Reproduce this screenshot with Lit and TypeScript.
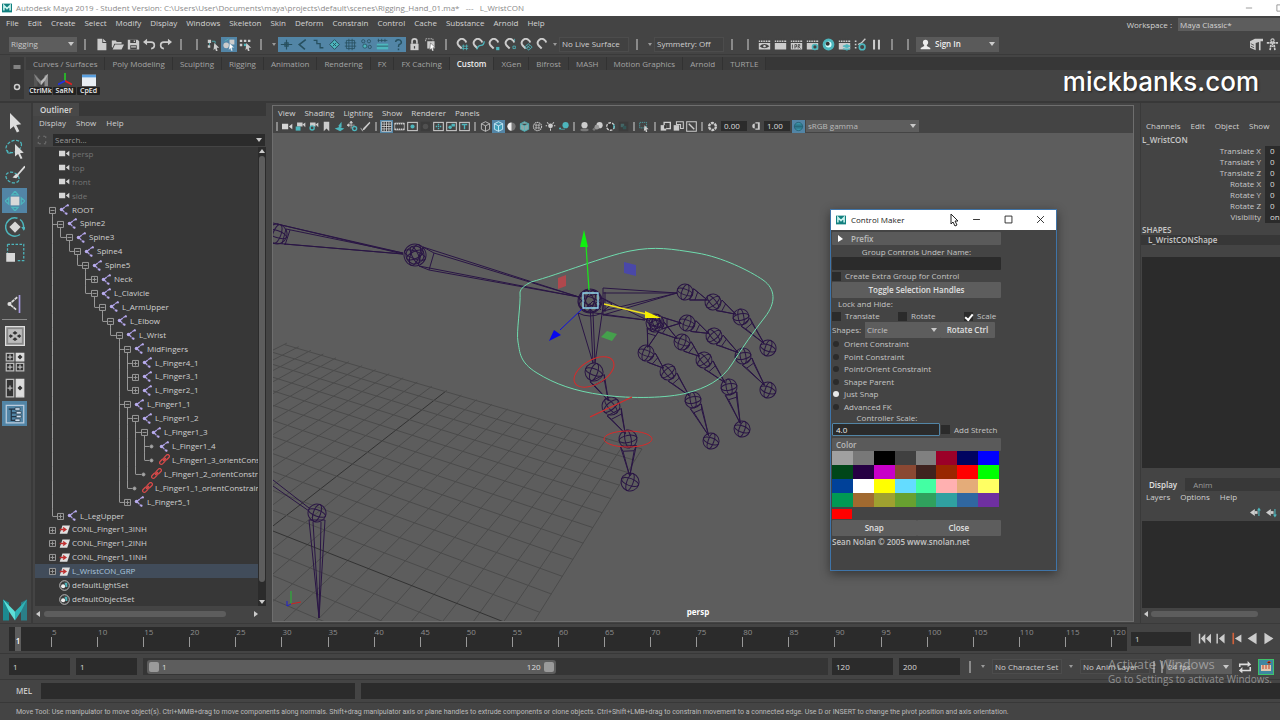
import { LitElement, html, svg, css, nothing } from "lit";
import { customElement } from "lit/decorators.js";
import { classMap } from "lit/directives/class-map.js";

const base = css`
  * { box-sizing: border-box; }
  :host { font-family: "Open Sans", "Noto Sans", sans-serif; font-size: 8px; line-height: 12px; color: #c8c8c8; }
  button, input, select { font: inherit; color: inherit; margin: 0; padding: 0; border: 0; border-radius: 0; background: none; outline: none; min-width: 0; }
  button { white-space: nowrap; }
  svg { display: block; flex: none; }
  .drop { position: relative; display: flex; align-items: center; background: #5d5d5d; }
  .drop select { appearance: none; flex: 1; height: 100%; padding: 0 14px 0 2px; }
  .drop::after { content: ""; position: absolute; right: 3px; top: calc(50% - 2px); border: 3px solid transparent; border-top: 4px solid #c8c8c8; border-bottom: 0; pointer-events: none; }
  .grip { width: 3px; align-self: stretch; margin: 2px; background: radial-gradient(circle, #6a6a6a 40%, transparent 50%) 0 0 / 2px 2px; }
`;

/* ---------- icon set, 16 x 16 ---------- */
const L = "#cccccc";
const T = "#4db6bd";
const K = "#27505f";
const clap = svg`<path d="M1 3h14v2H1zM1 6h14v8H1z" fill=${L}/><path d="M3 1v4M6 1v4M9 1v4M12 1v4" stroke="#444" stroke-width="1"/>`;
const magnet = svg`<path d="M10.500 2.500A5 5 0 0 0 3 9l4 4M10.500 2.500a5 5 0 0 1 2 3" fill="none" stroke=${L} stroke-width="2.400"/>`;
const box = svg`<rect x="1" y="2" width="14" height="12" fill="none" stroke=${L} stroke-width="1.500"/>`;
const cube = (c: string, f = "none") => svg`<path d="M8 1l6 3v8l-6 3-6-3V4zM2 4l6 3 6-3M8 7v8" fill=${f} stroke=${c} stroke-width="1.200"/>`;
const icons: Record<string, unknown> = {
  maya: svg`<path d="M0 1h16v14H0z" fill="#12807f"/><path d="M3 12V4l5 5 5-5v8" fill="none" stroke="#c9f2ee" stroke-width="2.500"/>`,
  mayaBig: svg`<path d="M0 1l4 2v12H0z" fill="#1d8a90"/><path d="M16 1l-4 2v12h4z" fill="#2a7f88"/><path d="M0 1l8 8v6L4 9z" fill="#5ee0d8"/><path d="M16 1L8 9v6l4-6z" fill="#2fb3b5"/>`,
  mayaGray: svg`<path d="M0 1l4 2v12H0z" fill="#555"/><path d="M16 1l-4 2v12h4z" fill="#8a8a8a"/><path d="M0 1l8 8v5L3 8z" fill="#888"/><path d="M16 1L8 9v5l5-6z" fill="#bbb"/>`,
  min: svg`<path d="M3 8h10" stroke="currentColor" stroke-width="1.300"/>`,
  max: svg`<path d="M3 3h10v10H3z" fill="none" stroke="currentColor" stroke-width="1.300"/>`,
  close: svg`<path d="M3 3l10 10M13 3L3 13" stroke="currentColor" stroke-width="1.300"/>`,
  newFile: svg`<path d="M3 1h6v5h5v9H3zM10 1l4 4h-4z" fill=${L}/>`,
  open: svg`<path d="M1 3h5l1 2h6v2H4l-2 5-1-1z" fill=${L}/><path d="M5 8h11l-3 6H2z" fill=${L}/>`,
  save: svg`<path d="M1 2h12l2 2v10H1z" fill=${L}/><path d="M4 2h7v4H4zM4 9h8v5H4z" fill="#444"/><path d="M5 11h6M9 3v2" stroke=${L} stroke-width="1.500"/>`,
  undo: svg`<path d="M3 5h7a3.500 3.500 0 0 1 0 8" fill="none" stroke=${L} stroke-width="2"/><path d="M0 5l5-4v8z" fill=${L}/>`,
  redo: svg`<path d="M13 5H6a3.500 3.500 0 0 0 0 8" fill="none" stroke=${L} stroke-width="2"/><path d="M16 5l-5-4v8z" fill=${L}/>`,
  selHier: svg`<path d="M1 2h4v4H1zM1 9h3v3H1z" fill=${L}/><path d="M6 4h4v3M3 6v3" stroke=${T} fill="none"/><path d="M9 6l6 6h-3l1 4-2 0-1-3-2 2z" fill=${L}/>`,
  selObj: svg`<circle cx="4" cy="9" r="3.500" fill=${L}/><path d="M8 2h6v6H8z" fill=${L}/><path d="M2 4l5-3" stroke=${T}/><path d="M8 6l6 6h-3l1 4-2 0-1-3-2 2z" fill="#fff" stroke="#5285a6" stroke-width=".7"/>`,
  selComp: svg`<path d="M1 2h3v3H1zM6 2h3v3H6zM1 7h3v3H1zM11 2h3v3h-3z" fill=${L}/><path d="M6 7h3v3H6z" fill=${T}/><path d="M9 6l6 6h-3l1 4-2 0-1-3-2 2z" fill=${L}/>`,
  mPlus: svg`<path d="M8 2v12M1 8h14M6 6h4v4H6z" stroke=${K} fill="none" stroke-width="1.400"/>`,
  mAngle: svg`<path d="M12 2L4 8l7 6" stroke=${K} fill="none" stroke-width="2"/>`,
  mCurve: svg`<path d="M2 3h4v4h4v5h4" stroke=${K} fill="none" stroke-width="1.600"/>`,
  mDiamond: svg`<path d="M8 2l6 6-6 6-6-6zM6 6l4 4M10 6l-4 4" stroke=${K} fill=${T} stroke-width="1.200"/>`,
  mLattice: svg`<path d="M3 3h10v10H3zM6 1v14M10 1v14M1 6h14M1 10h14" stroke=${K} fill="none"/>`,
  mParticles: svg`<circle cx="4" cy="4" r="2" fill="none" stroke=${K}/><circle cx="11" cy="4" r="2" fill="none" stroke=${K}/><circle cx="6" cy="10" r="2.500" fill=${T} stroke=${K}/><circle cx="12" cy="11" r="2" fill="none" stroke=${K}/>`,
  mRender: svg`<path d="M1 7h14v7H1z" fill=${T}/><path d="M2 3h12M3 1v4M7 1v4M11 1v4M1 10h14" stroke=${K}/>`,
  mHelp: svg`<path d="M4.500 5a3.500 3 0 1 1 4.500 3q-1 .5-1 3M8 13v2" stroke=${K} fill="none" stroke-width="1.800"/>`,
  lock: svg`<path d="M3 7h10v8H3z" fill=${L}/><path d="M5 7V4a3 3 0 0 1 6 0v3" stroke=${L} fill="none" stroke-width="2"/><path d="M8 10v3" stroke="#444" stroke-width="1.500"/>`,
  hilite: svg`<path d="M2 4V1h9v9H8" fill="none" stroke=${L} stroke-dasharray="2 1"/><path d="M4 4h9v9H4z" fill=${L}/><path d="M8 6l6 6h-3l1 4-2 0-1-3-2 2z" fill="#fff" stroke="#444" stroke-width=".6"/>`,
  magGrid: svg`${magnet}<path d="M9 8v7M13 8v7M7 10h8M7 13h8" stroke=${T}/>`,
  magCurve: svg`${magnet}<path d="M6 14q1-5 5-5t4-5" stroke=${T} fill="none" stroke-width="1.600"/>`,
  magPoint: svg`${magnet}<path d="M10 11h4v4h-4z" fill=${T}/>`,
  magProj: svg`${magnet}<path d="M13 1v3M11 10h3v3h-3z" stroke=${T} fill="none"/>`,
  magPlane: svg`${magnet}<path d="M10 7l5 4-4 4-5-4zM8 9l5 4M12 9l-4 4" stroke=${T} fill="none"/>`,
  magLive: magnet,
  rView: svg`${clap}<path d="M2 10q6-5 12 0-6 5-12 0z" fill="#444"/><circle cx="8" cy="10" r="1.500" fill=${L}/>`,
  rFrame: clap,
  rIpr: svg`${clap}<path d="M3 8v5M6 13V8h2v3H6M10 13V8h2v2h-2l3 3" stroke="#444" fill="none"/>`,
  rSet: svg`${clap}<circle cx="11" cy="11" r="3" fill="#444" stroke=${T} stroke-width="2"/>`,
  rHyper: svg`<circle cx="8" cy="8" r="5.500" fill="#dff" stroke=${T} stroke-width="3.500"/><circle cx="7" cy="7" r="2.500" fill="#333"/>`,
  rLayers: svg`${clap}<path d="M6 10l5-2 4 2-4 2zM6 13l5 2 4-2" fill=${T} stroke=${T}/>`,
  rLight: svg`<path d="M1 4h2M1 8h2M1 12h2M5 8l4-2 5-5" stroke=${L} stroke-width="1.700"/><circle cx="10" cy="11" r="3.500" fill="none" stroke=${T} stroke-width="2"/>`,
  pause: svg`<path d="M5 2v12M11 2v12" stroke=${L} stroke-width="2.500"/>`,
  user: svg`<circle cx="8" cy="5" r="3.800" fill="#eee"/><path d="M6 8h4v2l5 3v2H1v-2l5-3z" fill="#eee"/>`,
  modelKit: svg`<path d="M0 4l6-3h10v3h-3v11h-2V5L7 6v9l-7-3z" fill=${L}/><path d="M1 7l4 2M1 10l4 2" stroke="#444"/>`,
  character: svg`<circle cx="8" cy="3" r="2" fill="none" stroke=${L} stroke-width="1.400"/><path d="M1 6h14M8 6v5M5 15l1-7M11 15l-1-7" stroke=${L} stroke-width="2" fill="none" stroke-dasharray="3 .6"/>`,
  rows: svg`<path d="M1 6h14M1 10h14" stroke=${L} stroke-width="2"/>`,
  gear: svg`<circle cx="8" cy="8" r="5" fill="none" stroke=${L} stroke-width="3"/>`,
  axes: svg`<path d="M8 9V0" stroke="#28c028" stroke-width="2"/><path d="M8 9l8 4" stroke="#e02020" stroke-width="2"/><path d="M8 9l-8 4" stroke="#2030e0" stroke-width="2"/>`,
  window: svg`<path d="M0 2h16v13H0z" fill="#e8eef4"/><path d="M0 2h16v3H0z" fill="#5aa0e0"/>`,
  arrow: svg`<path d="M4 0l9 9-4 .5 2.500 5-2 1L7 10.500 4 13z" fill="#dcdcdc"/>`,
  lasso: svg`<ellipse cx="7" cy="6" rx="6.500" ry="4.500" fill="none" stroke=${T} stroke-dasharray="2.500 1.200" transform="rotate(-25 7 6)"/><path d="M2 9q-1 3 3 2" stroke=${T} fill="none"/><path d="M8 4l7 7-3 .4 2 4-1.500.6-2-4L8 14z" fill="#dcdcdc"/>`,
  paint: svg`<ellipse cx="6" cy="10" rx="5.500" ry="4" fill="none" stroke=${T} stroke-dasharray="2.500 1.200" transform="rotate(25 6 10)"/><path d="M16 1l-6 7" stroke="#dcdcdc" stroke-width="1.500"/><path d="M6 10l3-3 2 1.500-2 2z" fill="#dcdcdc"/>`,
  move: svg`<path d="M4.500 4.500h7v7h-7z" fill="#d8d8d8"/><path d="M8 0l2.500 3h-5zM8 16l2.500-3h-5zM0 8l3-2.500v5zM16 8l-3-2.500v5z" fill="none" stroke=${T}/>`,
  rotate: svg`<path d="M8 3.500L12.500 8 8 12.500 3.500 8z" fill="#d8d8d8"/><path d="M10 1A7.300 7.300 0 1 0 12 14M12 2q3 2 3 7" fill="none" stroke=${T} stroke-width="1.200"/><path d="M13 8h4l-2 3z" fill=${T}/>`,
  scale: svg`<path d="M2 1h13v13H9M2 1v7" fill="none" stroke=${T} stroke-dasharray="2 1.200"/><path d="M1 8h7v7H1z" fill="#d8d8d8"/>`,
  lastTool: svg`<path d="M10 2L3 8l6 5" fill="none" stroke="#ddd" stroke-width="1.500" stroke-dasharray="3 .5"/><circle cx="3" cy="8" r="1.700" fill="#ddd"/><path d="M12 0v16" stroke="#a79be0" stroke-width="1.500"/>`,
  persp: svg`<path d="M.5.5h15v15H.5z" fill="#888" stroke="#ddd"/><path d="M2.500 2.500h11v11h-11z" fill="#bbb"/><path d="M8 4l2 1.500L8 7 6 5.500zM8 9l2 1.500L8 12l-2-1.500zM4.500 6.500L6.500 8l-2 1.500L3 8zM11.500 6.500L13 8l-1.500 1.500-2-1.500z" fill="#333"/>`,
  quad: svg`<path d="M1 1h6v6H1zM1 9h6v6H1zM9 9h6v6H9z" fill="#333" stroke="#bbb"/><path d="M9 1h6v6H9z" fill="#ddd" stroke="#ddd"/><path d="M4 2v4M2 4h4M4 10v4M2 12h4M12 10v4M10 12h4" stroke="#bbb"/><path d="M12 2l2 2-2 2-2-2z" fill="#333"/>`,
  two: svg`<path d="M1 1h6v14H1z" fill="#333" stroke="#bbb"/><path d="M9 1h6v14H9z" fill="#ddd" stroke="#ddd"/><path d="M4 6v4M2 8h4" stroke="#bbb"/><path d="M12 6l2 2-2 2-2-2z" fill="#333"/>`,
  tree: svg`<path d="M1 1h14v14H1z" fill="none" stroke="#bcd"/><path d="M3 4h5M5 4v9h4M5 7h5M5 10h5" fill="none" stroke="#234" stroke-width="1"/><path d="M8 3h4v2H8zM9 6h4v2H9zM9 9h4v2H9zM8 12h4v2H8z" fill="#cde" stroke="#234" stroke-width=".5"/>`,
  cam: svg`<path d="M0 4h9v8H0zM10 8l5-4v8z" fill="#d5d5d5"/>`,
  joint: svg`<path d="M13 1L4 8l7 7" fill="none" stroke="#a99be0" stroke-width="2" stroke-dasharray="5 .8"/><circle cx="3.500" cy="8" r="2.400" fill="#b8acec"/><circle cx="13" cy="2" r="1.500" fill="#b8acec"/><circle cx="11" cy="14" r="1.500" fill="#b8acec"/>`,
  link: svg`<g transform="rotate(-45 8 8)" fill="none" stroke="#d94a4a" stroke-width="1.800"><rect x="-1" y="5.500" width="9" height="5" rx="2.500"/><rect x="8" y="5.500" width="9" height="5" rx="2.500"/><path d="M5 8h6"/></g>`,
  group: svg`<path d="M5 2h11l-4 12H1z" fill="#e0e0e0"/><path d="M1 8h8M6 5l4 3-4 3" stroke="#c03030" fill="none" stroke-width="2"/>`,
  set: svg`<circle cx="8" cy="8" r="7" fill="#3a3a3a" stroke="#ccc" stroke-width="1.300"/><circle cx="6" cy="9" r="3" fill="#eee"/><path d="M8 4h4v6h-2z" fill=${T}/>`,
  frame: svg`<path d="M2 6V2h4M10 2h4v4M14 10v4h-4M6 14H2v-4" fill="none" stroke="#777" stroke-width="1.500" stroke-dasharray="3 1"/>`,
  camLock: svg`<path d="M3 2h8v6H3zM11 5l4-3v7z" fill=${L}/><path d="M1 8h7v6H1z" fill=${T}/>`,
  camGear: svg`<path d="M3 2h8v6H3zM11 5l4-3v7z" fill=${L}/><circle cx="6" cy="10" r="3" fill="#444" stroke=${T} stroke-width="2"/>`,
  bookmark: svg`<path d="M4 1h8v14l-4-4-4 4z" fill=${L}/>`,
  plane: svg`<path d="M1 11l6-2 8 2-6 4z" fill=${T}/><path d="M7 11V6l4-5v8z" fill=${T}/>`,
  pan: svg`<path d="M6 1v10M1 6h10M6 0l2 3H4zM0 6l3-2v4z" stroke=${L} fill=${L}/><circle cx="11" cy="11" r="3" fill="none" stroke=${T} stroke-width="2"/>`,
  pencil: svg`<path d="M14 1L5 10l-2 4 4-2 8-9z" fill=${L}/><path d="M1 10l3 5" stroke=${L}/>`,
  grid: svg`<path d="M1 1h14v14H1z" fill="#222"/><path d="M1 1h14v14H1zM4.500 1v14M8 1v14M11.500 1v14M1 4.500h14M1 8h14M1 11.500h14" stroke="#eee" fill="none"/>`,
  film: svg`<path d="M1 3h14v10H1z" fill="none" stroke=${L}/><path d="M1 4h14M1 12h14" stroke=${L} stroke-width="2" stroke-dasharray="2 1"/>`,
  res: svg`${box}<circle cx="8" cy="8" r="3" fill=${T}/>`,
  dim: svg`<path d="M1 1h14v14H1z" fill="#3c3c3c"/><circle cx="8" cy="8" r="4" fill="#505050"/>`,
  chart: svg`${box}<path d="M4 8h8M8 4v8" stroke=${T} stroke-width="2" stroke-dasharray="2 1"/>`,
  action: svg`${box}<circle cx="6" cy="9" r="2.500" fill=${T}/><path d="M8 4h5v4H8z" fill=${T}/>`,
  title: svg`${box}<path d="M4 5h8M8 5v7" stroke=${T} stroke-width="2"/>`,
  wire: cube(L),
  shaded: cube("#d8f4ff", "#3f9fb8"),
  half: svg`<circle cx="8" cy="8" r="6" fill="#777"/><path d="M8 2a6 6 0 0 0 0 12z" fill="#eee"/>`,
  textured: cube(T, "#8aa"),
  checker: svg`<circle cx="8" cy="8" r="6" fill="none" stroke=${L} stroke-dasharray="2 1" stroke-width="1.500"/><path d="M4 6h8M4 10h8M6 4v8M10 4v8" stroke=${L}/>`,
  bulb: svg`<circle cx="8" cy="7" r="3.500" fill=${L}/><path d="M8 11v3M1 7h2M13 7h2M3 2l2 2M13 2l-2 2" stroke=${L} stroke-width="1.500"/>`,
  shadow: svg`<circle cx="11" cy="6" r="4.500" fill=${T}/><circle cx="3" cy="11" r="1.500" fill=${T}/><path d="M4 12h6" stroke=${T}/>`,
  ao: svg`<circle cx="8" cy="6" r="4.500" fill=${L}/><ellipse cx="8" cy="13" rx="6" ry="2" fill="#777"/>`,
  blur: svg`<circle cx="11" cy="6" r="4.500" fill=${L}/><circle cx="7" cy="9" r="3.500" fill="#999"/><circle cx="3" cy="12" r="2" fill="#777"/>`,
  aa: svg`<circle cx="8" cy="8" r="5.500" fill="#333" stroke=${L} stroke-width="2" stroke-dasharray="4 1.500"/><path d="M13 5v6" stroke=${T} stroke-width="2"/>`,
  dof: svg`<path d="M1 1h14v14H1z" fill="#3c3c3c"/><path d="M4 4h5v5H4z" fill="#466"/><path d="M7 7h5v5H7z" fill="#355"/>`,
  isolate: svg`<path d="M1 2h10v8H1z" fill="none" stroke=${T} stroke-dasharray="2 1"/><path d="M8 6l6 6h-3l1 4-2 0-1-3-2 2z" fill=${L}/>`,
  xray: svg`<path d="M1 6h8v8H1z" fill=${L}/><path d="M6 2h9v9H6z" fill="none" stroke=${L} stroke-width="2"/><path d="M6 6h3v5H6z" fill="#333"/>`,
  xrayA: svg`<path d="M5 1h10v10h-4V5H5z" fill="none" stroke=${L} stroke-width="1.500"/><path d="M1 6h8v8H1z" fill=${L}/>`,
  xrayJ: svg`<path d="M1 1h14v14H1z" fill="none" stroke=${L} stroke-width="1.500"/><path d="M4 4l8 8" stroke=${L} stroke-width="2"/>`,
  aperture: svg`<circle cx="8" cy="8" r="5" fill="none" stroke=${L} stroke-width="3.500" stroke-dasharray="4 1.200"/>`,
  contrast: svg`<path d="M7 2h7v12H7v-2h4V4H7z" fill=${L}/><path d="M6 4a4 4 0 0 0 0 8z" fill=${L}/>`,
  ball: svg`<circle cx="8" cy="8" r="6" fill="#3a94a8" stroke="#1f5566"/><path d="M3 6h10M2 8h12M3 10h10" stroke="#1f5566"/>`,
  layerUp: svg`<path d="M0 8l7-5v10z" fill=${L}/><path d="M7 6h4v4H7z" fill=${L}/><path d="M13 3v10M11 5l2-3 2 3" stroke=${T} fill="none" stroke-width="1.600"/>`,
  layerDown: svg`<path d="M0 8l7-5v10z" fill=${L}/><path d="M7 6h4v4H7z" fill=${L}/><path d="M13 3v10M11 11l2 3 2-3" stroke=${T} fill="none" stroke-width="1.600"/>`,
  toStart: svg`<path d="M1 2h1.800v12H1zM9 2v12L3.500 8zM16 2v12L10 8z" fill=${L}/>`,
  stepBack: svg`<path d="M3 2h1.800v12H3zM13 2v12L6 8z" fill=${L}/>`,
  keyBack: svg`<path d="M3 1h2v14H3z" fill="#d0603a"/><path d="M14 3v10L6 8z" fill=${L}/>`,
  playBack: svg`<path d="M13 1v14L2 8z" fill=${L}/>`,
  play: svg`<path d="M3 1v14l11-7z" fill=${L}/>`,
  loop: svg`<path d="M2 8V5h10M14 8v4H4" stroke="#ddd" fill="none" stroke-width="1.800"/><path d="M11 1l4 4-4 3zM5 8l-4 4 4 3z" fill="#ddd"/>`,
  prefs: svg`<path d="M0 0h16v16H0z" fill="#3f86a0" stroke="#3fc26a" stroke-width="2"/><path d="M3 6h10v6H3z" fill="#e0c8b0"/><path d="M5 6v4M8 6v4M11 3v7M9 4l2-2 2 2" stroke="#c04020" stroke-width="1"/>`,
};
const icon = (name: string, size = 12) =>
  svg`<svg width=${size} height=${size} viewBox="0 0 16 16" aria-hidden="true">${icons[name]}</svg>`;

/* ---------- outliner ---------- */
type Row = [name: string, level: number, kind: string, box?: string];
const ROWS: Row[] = [
  ["persp", 0, "cam"], ["top", 0, "cam"], ["front", 0, "cam"], ["side", 0, "cam"],
  ["ROOT", 0, "joint", "-"], ["Spine2", 1, "joint", "-"], ["Spine3", 2, "joint", "-"], ["Spine4", 3, "joint", "-"],
  ["Spine5", 4, "joint", "-"], ["Neck", 5, "joint", "+"], ["L_Clavicle", 5, "joint", "-"], ["L_ArmUpper", 6, "joint", "-"],
  ["L_Elbow", 7, "joint", "-"], ["L_Wrist", 8, "joint", "-"], ["MidFingers", 9, "joint", "-"],
  ["L_Finger4_1", 10, "joint", "+"], ["L_Finger3_1", 10, "joint", "+"], ["L_Finger2_1", 10, "joint", "+"],
  ["L_Finger1_1", 9, "joint", "-"], ["L_Finger1_2", 10, "joint", "-"], ["L_Finger1_3", 11, "joint", "-"],
  ["L_Finger1_4", 12, "joint", "."], ["L_Finger1_3_orientConst", 12, "link", "."],
  ["L_Finger1_2_orientConstra", 11, "link", "."], ["L_Finger1_1_orientConstraint", 10, "link", "."],
  ["L_Finger5_1", 9, "joint", "+"], ["L_LegUpper", 1, "joint", "+"],
  ["CONL_Finger1_3INH", 0, "group", "+"], ["CONL_Finger1_2INH", 0, "group", "+"], ["CONL_Finger1_1INH", 0, "group", "+"],
  ["L_WristCON_GRP", 0, "group", "+"], ["defaultLightSet", 0, "set"], ["defaultObjectSet", 0, "set"],
];
const indent = (level: number) => Math.round((level * 25) / 3);
const continues = (i: number, level: number) => {
  for (let j = i + 1; j < ROWS.length; j++) {
    if (ROWS[j][1] <= level) return false;
    if (ROWS[j][1] === level + 1) return true;
  }
  return false;
};

@customElement("outliner-panel")
class OutlinerPanel extends LitElement {
  static styles = [base, css`
    :host { display: flex; flex-direction: column; background: #444; padding-right: 2px; min-height: 0; }
    .tabs { display: flex; background: #383838; height: 13px; }
    .tab { background: #484848; padding: 0 7px; font-weight: 600; color: #d8d8d8; }
    .menu { display: flex; gap: 10px; padding: 0 6px; height: 13px; color: #d0d0d0; }
    .search { display: flex; gap: 6px; align-items: center; padding: 0 1px 0 4px; margin: 5px 0 1px; }
    .drop { flex: 1; height: 12px; background: #2b2b2b; }
    .drop input { flex: 1; height: 12px; padding: 0 2px; color: #999; }
    .drop input::placeholder { color: #999; opacity: 1; }
    .body { flex: 1; display: grid; grid-template: minmax(0, 1fr) / minmax(0, 1fr) 8px; background: #2b2b2b; min-height: 0; margin-left: 2px; }
    .list { list-style: none; margin: 0; padding: 0; display: grid; grid-auto-rows: minmax(0, 1fr); background: #373737; overflow: hidden; }
    .row { min-height: 0; display: flex; align-items: center; white-space: nowrap; }
    .row svg.guides { height: 100%; }
    .row span { padding-left: 2px; color: #d0d0d0; }
    .row.cam span { color: #757575; }
    .row.on { background: #414c5a; }
    .row.on span { color: #a9c4dc; }
    .bar { display: flex; flex-direction: column; align-items: center; gap: 3px; padding: 2px 0; }
    .thumb { width: 6px; border-radius: 3px; background: #5d5d5d; flex: 1; }
    .rest { flex: 0 1 12px; }
    .hbar { display: flex; align-items: center; gap: 4px; height: 9px; margin: 3px 0 5px; padding: 0 8px 0 3px; }
    .hthumb { flex: 9; height: 6px; border-radius: 3px; background: #5d5d5d; }
    .hrest { flex: 1; }
  `];
  guides(i: number) {
    const [, level, , mark] = ROWS[i];
    const x = (l: number) => indent(l) + 17.5;
    const parts: unknown[] = [];
    for (let k = 0; k < level - 1; k++) {
      if (continues(i, k)) parts.push(svg`<line x1=${x(k)} x2=${x(k)} y1="0" y2="100%" />`);
    }
    if (level > 0) {
      const p = x(level - 1);
      parts.push(svg`<line x1=${p} x2=${p} y1="0" y2=${continues(i, level - 1) ? "100%" : "50%"} />`);
      parts.push(svg`<svg y="50%" overflow="visible"><path d="M${p} .5H${x(level) - 3}" /></svg>`);
    }
    const c = x(level);
    if (mark === "-") parts.push(svg`<line x1=${c} x2=${c} y1="70%" y2="100%" />`);
    if (mark === ".") parts.push(svg`<svg y="50%" overflow="visible"><circle cx=${c - 1} cy=".5" r="1.500" fill="#aaa" /></svg>`);
    if (mark === "-" || mark === "+") {
      parts.push(svg`<svg y="50%" overflow="visible"><path d="M${c - 3} -2.500h6v6h-6z" fill="#373737" /><path d="M${c - 2} .5h4" />${
        mark === "+" ? svg`<path d="M${c} -1.500v4" />` : nothing}</svg>`);
    }
    return svg`<svg class="guides" width=${indent(level) + 24} stroke="#989898" stroke-width="1" fill="none">${parts}</svg>`;
  }
  render() {
    return html`
      <div class="tabs"><button class="tab">Outliner</button></div>
      <div class="menu">${["Display", "Show", "Help"].map((m) => html`<button>${m}</button>`)}</div>
      <div class="search">${icon("frame", 10)}<div class="drop"><input aria-label="Search" placeholder="Search..." /></div></div>
      <div class="body">
        <ul class="list">
          ${ROWS.map(([name, , kind], i) => html`
            <li class=${classMap({ row: true, cam: kind === "cam", on: name === "L_WristCON_GRP" })}>
              ${this.guides(i)}${icon(kind, 11)}<span>${name}</span>
            </li>`)}
        </ul>
        <div class="bar">
          <svg width="6" height="4"><path d="M0 4h6L3 0z" fill="#ccc" /></svg><div class="thumb"></div><div class="rest"></div>
          <svg width="6" height="4"><path d="M0 0h6L3 4z" fill="#ccc" /></svg>
        </div>
      </div>
      <div class="hbar"><svg width="4" height="6"><path d="M4 0v6L0 3z" fill="#ccc" /></svg><div class="hthumb"></div><div class="hrest"></div>
        <svg width="4" height="6"><path d="M0 0v6l4-3z" fill="#ccc" /></svg></div>`;
  }
}

/* ---------- viewport scene ---------- */
const joint = (x: number, y: number, r: number, a = 20) => svg`<g transform="translate(${x} ${y}) rotate(${a})">
  <circle r=${r} /><ellipse rx=${r} ry=${r * 0.35} /><ellipse rx=${r * 0.4} ry=${r} /></g>`;
const bone = (x1: number, y1: number, x2: number, y2: number, w: number, off = 7) => {
  const d = Math.hypot(x2 - x1, y2 - y1);
  const ux = (x2 - x1) / d, uy = (y2 - y1) / d;
  const bx = x1 + ux * off, by = y1 + uy * off;
  const ex = x2 - ux * 6, ey = y2 - uy * 6;
  const pt = (s: number, f: number) => `${bx - uy * w * s + ux * f} ${by + ux * w * s + uy * f}`;
  return svg`<path d="M${pt(1, 0)}L${pt(-1, 0)}L${pt(-0.7, 5)}L${pt(0.7, 5)}ZM${pt(1, 0)}L${ex} ${ey}L${pt(-1, 0)}M${pt(0.7, 5)}L${ex} ${ey}L${pt(-0.7, 5)}" />`;
};
const chain = (pts: number[][], r = 8, w = 6) => pts.map(([x, y], i) => svg`
  ${joint(x, y, r, 20 + i * 30)}${i < pts.length - 1 ? bone(x, y, pts[i + 1][0], pts[i + 1][1], w) : nothing}`);

const floor = () => {
  const lines: unknown[] = [];
  for (let i = 0; i <= 24; i++) {
    const x = 642 - 17.8 * i + 0.125 * i * i;
    const y = 449 - (642 - x) * 0.298;
    const k = (660 - y) / (y - 37);
    lines.push(svg`<path d="M${x} ${y}L${x + (x - 900) * k} 660" stroke=${i === 12 ? "#333" : "#4b4b4b"} />`);
  }
  for (let j = 0; j <= 16; j++) {
    const y = 449 + 11 * j + 0.35 * j * j;
    const x = 642 - (y - 449) / 1.6;
    const m = (y + 206) / (x + 1600);
    const left = (343 + 143.5 - y + m * x) / (m + 0.5);
    lines.push(svg`<path d="M${x} ${y}L${left} ${y + (left - x) * m}" stroke=${j === 12 ? "#333" : "#4b4b4b"} />`);
  }
  return lines;
};

const scene = () => svg`
  <svg class="scene" viewBox="273 133 860 488" preserveAspectRatio="xMidYMid slice" fill="none">
    <g stroke-width="1">${floor()}</g>
    <g stroke="#2a1645" stroke-width="1">
      ${joint(277, 234, 10)}
      <path d="M277 224L403 253M273 223L403 254M286 229L403 253M284 244L403 254M273 243L403 254M286 229l-4 15M290 230l-5 15" />
      ${joint(415, 255, 11)}${joint(415, 255, 9, 65)}
      <path d="M423 247L579 297M434 253L579 297M419 266L579 297M429 270L579 297M423 247l-5 19M434 253l-5 17M423 247l11 6M419 266l10 4" />
      ${joint(590, 301, 11)}${joint(590, 301, 12, 65)}
      <path d="M603 288v27M605 292v20M603 288L677 293M603 293L677 293M603 311L677 293M603 315L677 293M600 297L649 321M603 315L645 320M588 312L645 320M600 297l12 7-9 7" />
      <path d="M578 313L593 363M590 303L593 363M593 313L595 363M604 300L595 363M578 313q12 6 24 0M585 309l8-8 8 9" />
      ${chain([[685, 292], [713, 302], [741, 317], [768, 348]])}
      ${joint(655, 323, 9)}${joint(655, 323, 6, 70)}
      ${bone(655, 323, 687, 323, 6)}${bone(655, 323, 682, 342, 6)}${bone(655, 323, 646, 353, 6)}
      ${chain([[687, 323], [714, 336], [743, 356], [768, 390]])}
      ${chain([[682, 342], [704, 360], [729, 387], [742, 429]])}
      ${chain([[646, 353], [668, 372], [693, 400], [711, 441]])}
      ${chain([[594, 372], [611, 406], [628, 439], [630, 482]], 9, 8)}
      <path d="M273 480L309 508M273 486L309 511" />${joint(317, 513, 9)}
      <path d="M309 520L319 618L325 520M313 522L319 618M321 522L319 618M309 520h16" />
    </g>
    <path d="M531 282C560 274 605 256 630 251S672 249 697 253 750 271 763 280 776 303 765 317 742 348 732 364 706 388 687 393 632 399 603 395 555 384 537 373 520 352 518 342 521 305 520 292Q521 287 531 282Z" stroke="#6fdcae" />
    <g stroke="#d82a2a">
      <ellipse cx="594" cy="372" rx="22" ry="12" transform="rotate(-30 594 372)" />
      <path d="M590 417L632 397" stroke-width="1.300" /><ellipse cx="628" cy="439" rx="24" ry="8" />
    </g>
    <path d="M558 278l8-3v11l-8 3z" fill="#b0484d" /><path d="M624 262l12 3v11l-12-3z" fill="#4a48a8" /><path d="M607 331l10 3-5 7-11-4z" fill="#45a04c" />
    <path d="M589 290L586 245" stroke="#1ee01e" stroke-width="1.300" /><path d="M584 230l-4 17h8z" fill="#0ef20e" />
    <path d="M582 309L560 330" stroke="#1010e0" /><path d="M549 341l5-11 7 5z" fill="#0808ee" />
    <path d="M604 304L646 314" stroke="#f0e020" stroke-width="1.300" /><path d="M661 318l-16-7v7z" fill="#f6f000" />
    <path d="M583 293h15v15h-15z" stroke="#8fd4ee" stroke-width="1.300" />
    <path d="M291 604V591" stroke="#20c030" /><path d="M291 604l10-2" stroke="#d02020" /><path d="M291 604l-4 2v-5" stroke="#2020d0" />
  </svg>`;

/* ---------- floating tool window ---------- */
const SWATCHES = [
  "#a0a0a0", "#787878", "#000000", "#404040", "#808080", "#9b0028", "#000460", "#0000ff",
  "#004619", "#260043", "#c800c8", "#8a4833", "#3f231f", "#992600", "#ff0000", "#00ff00",
  "#004199", "#ffffff", "#ffff00", "#64dcff", "#43ffa3", "#ffb0b0", "#e4ac79", "#ffff63",
  "#009954", "#a16a30", "#9fa130", "#68a130", "#30a15d", "#30a1a1", "#3067a1", "#6f30a1",
];

@customElement("control-maker")
class ControlMaker extends LitElement {
  static styles = [base, css`
    :host { display: flex; flex-direction: column; background: #444; border: 1px solid #3f74a8; box-shadow: 0 3px 10px rgba(0, 0, 0, .45); color: #c4c4c4; }
    .bar { display: flex; align-items: center; height: 20px; background: #fff; color: #222; padding: 0 6px 1px 5px; }
    .bar h2 { flex: 1; margin: 0; padding-left: 5px; font-size: 8px; font-weight: 400; }
    .bar .win { display: flex; width: 32px; justify-content: center; }
    .bar .win:last-child { width: 20px; margin-left: 6px; }
    .form { display: flex; flex-direction: column; width: 170px; padding-left: 1px; margin-top: 2px; }
    .head { display: flex; align-items: center; height: 13px; background: #5a5a5a; padding-left: 6px; gap: 8px; border-radius: 1px; font-weight: 600; color: #bbb; }
    .caption { text-align: center; height: 12px; line-height: 13px; }
    .caption.short { width: 110px; height: 10px; line-height: 10px; }
    .text { height: 13px; background: #2b2b2b; border-radius: 1px; }
    .check { display: flex; align-items: center; gap: 4px; }
    .check input { appearance: none; width: 9px; height: 9px; background: #2b2b2b; display: grid; place-items: center; }
    .check input:checked::after { content: ""; width: 6px; height: 3px; border: solid #fff; border-width: 0 0 2px 2px; transform: rotate(-50deg); }
    .btn { background: #5d5d5d; height: 16px; font-weight: 600; color: #e0e0e0; border-radius: 1px; }
    .lock { padding-left: 6px; height: 12px; }
    .three { display: grid; grid-template-columns: 66px 66px 1fr; height: 9px; margin-bottom: 3px; align-items: center; }
    .shapes { display: flex; align-items: center; height: 16px; }
    .shapes label { width: 33px; }
    .shapes .drop { width: 75px; height: 16px; }
    .shapes .btn { width: 55px; }
    .radios { display: flex; flex-direction: column; height: 75px; }
    .radio { flex: 1; display: flex; align-items: center; gap: 5px; padding-left: 1px; }
    .radio input { appearance: none; width: 6px; height: 6px; border-radius: 3px; background: #2b2b2b; }
    .radio input:checked { background: #e8e8e8; }
    .scale { display: flex; align-items: center; gap: 1px; height: 13px; }
    .scale .text { width: 108px; border: 1px solid #5285a6; padding: 0 3px; color: #eee; }
    .color { margin-top: 2px; padding-left: 4px; }
    .swatches { display: grid; grid-template-columns: repeat(8, 1fr); grid-auto-rows: 14px; width: 167px; }
    .current { width: 20px; height: 10px; background: #f00; margin: 2px 0 1px; }
    .pair { display: grid; grid-template-columns: 1fr 1fr; }
    .credit { font-weight: 600; }
  `];
  render() {
    const check = (label: string, on = false) => html`<label class="check"><input type="checkbox" ?checked=${on} />${label}</label>`;
    return html`
      <div class="bar">${icon("maya", 10)}<h2>Control Maker</h2>
        <svg width="10" height="14"><path d="M1 1v10l2-2 2 4 2-1-2-4h3z" fill="#fff" stroke="#222" /></svg>
        <button class="win" aria-label="Minimise">${icon("min", 11)}</button><button class="win" aria-label="Maximise">${icon("max", 11)}</button>
        <button class="win" aria-label="Close window">${icon("close", 11)}</button></div>
      <div class="form">
        <div class="head"><svg width="5" height="7"><path d="M0 0v7l5-3z" fill="#fff" /></svg>Prefix</div>
        <label class="caption" for="under">Group Controls Under Name:</label>
        <input class="text" id="under" />
        ${check("Create Extra Group for Control")}
        <button class="btn">Toggle Selection Handles</button>
        <div class="lock">Lock and Hide:</div>
        <div class="three">${check("Translate")}${check("Rotate")}${check("Scale", true)}</div>
        <div class="shapes"><label for="shape">Shapes:</label><div class="drop"><select id="shape"><option>Circle</option></select></div>
          <button class="btn">Rotate Ctrl</button></div>
        <div class="radios">
          ${["Orient Constraint", "Point Constraint", "Point/Orient Constraint", "Shape Parent", "Just Snap", "Advanced FK"].map((r) => html`
            <label class="radio"><input type="radio" name="mode" ?checked=${r === "Just Snap"} />${r}</label>`)}
        </div>
        <label class="caption short" for="cs">Controller Scale:</label>
        <div class="scale"><input class="text" id="cs" value="4.0" />${check("Add Stretch")}</div>
        <div class="head color">Color</div>
        <div class="swatches">${SWATCHES.map((c) => html`<div style="background:${c}"></div>`)}</div>
        <div class="current"></div>
        <div class="pair"><button class="btn">Snap</button><button class="btn">Close</button></div>
        <div class="credit">Sean Nolan © 2005 www.snolan.net</div>
      </div>`;
  }
}

/* ---------- application ---------- */
const MENUS = ["File", "Edit", "Create", "Select", "Modify", "Display", "Windows", "Skeleton", "Skin", "Deform", "Constrain", "Control", "Cache", "Substance", "Arnold", "Help"];
const SHELVES = ["Curves / Surfaces", "Poly Modeling", "Sculpting", "Rigging", "Animation", "Rendering", "FX", "FX Caching", "Custom", "XGen", "Bifrost", "MASH", "Motion Graphics", "Arnold", "TURTLE"];
const CHANNELS = [["Translate X", "0"], ["Translate Y", "0"], ["Translate Z", "0"], ["Rotate X", "0"], ["Rotate Y", "0"], ["Rotate Z", "0"], ["Visibility", "on"]];
const FRAMES = Array.from({ length: 24 }, (_, i) => (i + 1) * 5);

@customElement("app-root")
class AppRoot extends LitElement {
  static styles = [base, css`
    :host { display: flex; flex-direction: column; height: 100vh; position: relative; overflow: hidden; background: #444; }
    .title { display: flex; align-items: center; gap: 4px; height: 16px; padding: 0 0 0 2px; background: #fff; color: #8a8a8a; white-space: pre; }
    .title .name { flex: 1; }
    .title .win { display: flex; width: 27px; color: #888; }
    .title .win:last-child { width: 5px; overflow: hidden; }
    .menubar { display: flex; align-items: flex-start; height: 18px; color: #d4d4d4; }
    .menus { display: flex; gap: 9px; padding: 1px 6px; flex: 1; }
    .space { display: flex; align-items: center; gap: 6px; padding-top: 2px; }
    .space .drop { width: 102px; height: 13px; }
    .space .drop::after { display: none; }
    .status { display: flex; align-items: center; height: 21px; border-bottom: 1px solid #3a3a3a; }
    .mode { width: 68px; height: 15px; margin-left: 2px; }
    .ic { display: flex; width: 16px; height: 15px; align-items: center; justify-content: center; flex: none; }
    .ic.on { background: #5285a6; }
    .ic.narrow { width: 9px; }
    .sep { width: 16px; height: 11px; flex: none; background: linear-gradient(#8a8a8a, #8a8a8a) center / 2px 100% no-repeat; }
    .field { display: flex; align-items: center; height: 15px; background: #414141; border: 1px solid #4c4c4c; padding: 0 2px; width: 70px; color: #d0d0d0; white-space: nowrap; }
    .tri { border: 2px solid transparent; border-top: 3px solid #999; border-bottom: 0; }
    .sign { display: flex; align-items: center; gap: 4px; width: 83px; height: 15px; background: #5a5a5a; padding: 0 4px; color: #eee; font-weight: 600; }
    .sign span { flex: 1; text-align: left; }
    .sign .tri { border-width: 3px; border-top: 4px solid #ccc; border-bottom: 0; }
    .fill { flex: 1; }

    .shelf { display: flex; height: 48px; padding-top: 2px; border-bottom: 2px solid #383838; }
    .side { display: flex; flex-direction: column; align-items: center; justify-content: space-around; width: 14px; margin: 0 2px 2px 3px; background: #383838; padding-bottom: 2px; }
    .shelfmain { flex: 1; display: flex; flex-direction: column; min-width: 0; }
    .tabs { display: flex; height: 13px; background: #373737; color: #a4a4a4; }
    .tabs button { padding: 0 7px; border-right: 1px solid #323232; background: #3c3c3c; }
    .tabs button.on { background: #444; font-weight: 600; color: #eee; }
    .shelfrow { display: flex; padding: 3px 3px; gap: 1px; align-items: flex-start; }
    .item { display: flex; flex-direction: column; align-items: center; width: 23px; font-size: 7px; line-height: 8px; color: #eee; font-weight: 600; }
    .item span { background: #222; align-self: stretch; text-align: center; border-radius: 1px; }
    .brand { position: absolute; right: 21px; top: 64px; font: 500 26px/36px Inter, sans-serif; color: #fff; text-shadow: 1px 1px 2px #222; }

    .main { flex: 1; min-height: 0; display: grid; grid-template: minmax(0, 1fr) / 33px 235px minmax(0, 1fr) 140px; }
    .tools { display: flex; flex-direction: column; align-items: center; padding: 7px 4px 0 2px; gap: 1px; border-right: 2px solid #3a3a3a; }
    .tool { display: flex; width: 25px; height: 25px; align-items: center; justify-content: center; flex: none; }
    .tool.on { background: #5285a6; }
    .tools .gap { height: 24px; flex: none; }
    .tools hr { width: 25px; border: 0; height: 1px; background: #8a8a8a; margin: 2px 0; }
    .tools .logo { margin-top: auto; padding-bottom: 1px; }

    .view { margin: 2px 6px 1px 4px; border: 1px solid #6e6e6e; display: flex; flex-direction: column; min-height: 0; }
    .vmenu { display: flex; gap: 9px; padding: 0 5px; height: 13px; line-height: 11px; color: #d4d4d4; }
    .vbar { display: flex; align-items: center; height: 14px; }
    .vbar .ic { width: 13px; height: 13px; }
    .vbar .sep { width: 8px; height: 9px; }
    .vbar .num { width: 26px; height: 10px; background: #2b2b2b; padding: 0 3px; color: #ddd; margin: 0 2px; line-height: 10px; }
    .vbar .drop { width: 113px; height: 12px; margin-left: 1px; color: #bbb; }
    .canvas { flex: 1; min-height: 0; position: relative; background: #5d5d5d; overflow: hidden; }
    .scene { position: absolute; inset: 0; width: 100%; height: 100%; }
    .canvas .cam { position: absolute; left: 0; right: 10px; bottom: 3px; text-align: center; font-weight: 700; color: #fff; }

    .right { display: flex; flex-direction: column; border-left: 1px solid #3a3a3a; min-width: 0; overflow: hidden; }
    .rmenu { display: flex; gap: 10px; padding: 0 5px; color: #d0d0d0; white-space: nowrap; }
    .right .rmenu.top { padding-top: 17px; }
    .node { font-weight: 600; padding: 2px 1px 0; height: 13px; }
    .channel { display: grid; grid-template-columns: 1fr 15px; gap: 4px; height: 11px; align-items: center; text-align: right; }
    .channel input { height: 11px; background: #2b2b2b; padding-left: 5px; color: #ddd; width: 15px; }
    .shape { background: #373737; padding-left: 7px; height: 10px; line-height: 10px; font-weight: 600; }
    .dark { background: #2b2b2b; margin-left: 1px; }
    .dark.one { flex: 211; margin-top: 12px; }
    .dark.two { flex: 87; }
    .ltabs { display: flex; background: #383838; margin-top: 10px; height: 13px; color: #999; }
    .ltabs button { padding: 0 8px; }
    .ltabs .on { background: #444; font-weight: 600; color: #e0e0e0; }
    .acts { display: flex; justify-content: flex-end; gap: 5px; padding: 2px 3px; height: 18px; align-items: center; }
    .hbar { display: flex; align-items: center; gap: 3px; height: 10px; margin: 1px 0 4px 3px; }
    .hbar div { width: 107px; height: 6px; border-radius: 3px; background: #5d5d5d; }

    .timeline { display: flex; align-items: center; height: 31px; border-top: 1px solid #3a3a3a; border-bottom: 1px solid #383838; padding-right: 4px; }
    .timeline .grip, .range .grip { margin-right: 4px; }
    .ruler { flex: 1; display: grid; grid-template-columns: 42px repeat(23, 1fr) 16px; height: 24px; background: #2b2b2b; color: #8e8e8e; }
    .tick { display: flex; flex-direction: column; line-height: 9px; padding-left: 1px; }
    .tick::after { content: ""; width: 1px; height: 10px; background: #999; margin: 1px 0 0 -1px; }
    .now { width: 6px; margin-left: 6px; background: #5d5d5d; color: #fff; display: flex; align-items: center; justify-content: center; padding-top: 5px; font-weight: 600; }
    .box { background: #2b2b2b; height: 17px; padding: 0 4px; color: #d8d8d8; }
    .timeline .box { width: 60px; height: 14px; margin: 0 5px 0 4px; }
    .range { display: flex; align-items: center; height: 26px; border-bottom: 1px solid #383838; }
    .range .box { width: 61px; margin-right: 6px; }
    .track { flex: 1; display: flex; align-items: center; height: 17px; background: #353535; padding-left: 4px; margin-right: 4px; }
    .span { width: 60%; height: 14px; border-radius: 3px; background: #5d5d5d; display: flex; align-items: center; padding: 0 2px; gap: 3px; color: #ddd; }
    .span i { width: 10px; height: 10px; border-radius: 2px; background: #9a9a9a; }
    .range .sep { width: 8px; height: 12px; }
    .range .ic { width: 18px; }
    .range .fps { width: 66px; height: 15px; margin-right: 6px; }
    .end { display: flex; gap: 6px; align-items: center; padding-right: 6px; }
    .cmd { display: flex; align-items: center; height: 23px; border-bottom: 1px solid #383838; font-weight: 600; }
    .cmd label { width: 34px; padding-left: 9px; }
    .cmd input { height: 16px; background: #2b2b2b; }
    .cmd .a { flex: 314; margin-right: 6px; }
    .cmd .b { flex: 919; }
    .help { display: flex; align-items: center; height: 17px; color: #bcbcbc; white-space: nowrap; overflow: hidden; gap: 9px; font: 7px/12px Roboto, sans-serif; }
    .mark { position: absolute; right: 8px; bottom: 34px; width: 164px; color: rgba(200, 200, 200, .6); white-space: nowrap; font-size: 10px; line-height: 14px; pointer-events: none; }
    .mark b { display: block; font-weight: 400; font-size: 13px; line-height: 16px; }
    .panel { position: absolute; right: 223px; top: 209px; width: 227px; height: 362px; }
  `];

  ics(names: string[], on: string[] = [], size = 13) {
    return names.map((n) => n === "|" ? html`<span class="sep"></span>`
      : n === "v" ? html`<span class="ic narrow"><i class="tri"></i></span>`
      : html`<button class=${classMap({ ic: true, on: on.includes(n) })} aria-label=${n}>${icon(n, size)}</button>`);
  }

  render() {
    const masks = ["mPlus", "mAngle", "mCurve", "mDiamond", "mLattice", "mParticles", "mRender", "mHelp"];
    return html`
      <header class="title">${icon("maya", 10)}<span class="name">Autodesk Maya 2019 - Student Version: C:\\Users\\User\\Documents\\maya\\projects\\default\\scenes\\Rigging_Hand_01.ma*   ---   L_WristCON</span>
        <button class="win" aria-label="Minimise">${icon("min", 10)}</button><button class="win" aria-label="Maximise">${icon("max", 10)}</button></header>
      <nav class="menubar"><div class="menus">${MENUS.map((m) => html`<button>${m}</button>`)}</div>
        <div class="space"><label for="ws">Workspace :</label><div class="drop"><select id="ws"><option>Maya Classic*</option></select></div></div></nav>
      <div class="status"><span class="grip"></span>
        <div class="drop mode"><select aria-label="Menu set"><option>Rigging</option></select></div>
        ${this.ics(["|", "newFile", "open", "save", "undo", "redo", "|", "|", "selHier", "selObj", "selComp", "|", "v", ...masks, "lock", "hilite", "|",
          "magGrid", "magCurve", "magPoint", "magProj", "magPlane", "magLive", "v"], ["selObj", ...masks])}
        <span class="field">No Live Surface</span>${this.ics(["|", "v"])}<span class="field">Symmetry: Off</span>
        ${this.ics(["|", "|", "rView", "rFrame", "rIpr", "rSet", "rHyper", "rLayers", "rLight", "pause", "|", "|"])}
        <button class="sign">${icon("user", 11)}<span>Sign In</span><i class="tri"></i></button>
        <span class="fill"></span>${this.ics(["modelKit", "character"])}
      </div>
      <section class="shelf"><span class="grip"></span><div class="side">${icon("rows", 8)}${icon("gear", 8)}</div>
        <div class="shelfmain"><div class="tabs">${SHELVES.map((s) => html`<button class=${classMap({ on: s === "Custom" })}>${s}</button>`)}</div>
          <div class="shelfrow">${[["mayaGray", "CtrlMk"], ["axes", "SaRN"], ["window", "CpEd"]].map(([i, t]) => html`<button class="item">${icon(i, 14)}<span>${t}</span></button>`)}</div></div>
      </section>
      <div class="brand">mickbanks.com</div>

      <main class="main">
        <div class="tools">
          ${["arrow", "lasso", "paint", "move", "rotate", "scale"].map((t) => html`<button class=${classMap({ tool: true, on: t === "move" })} aria-label=${t}>${icon(t, 20)}</button>`)}
          <div class="gap"></div><button class="tool" aria-label="Last tool">${icon("lastTool", 18)}</button><hr />
          ${["persp", "quad", "two", "tree"].map((t) => html`<button class=${classMap({ tool: true, on: t === "tree" })} aria-label=${t}>${icon(t, 20)}</button>`)}
          <div class="logo">${icon("mayaBig", 24)}</div>
        </div>
        <outliner-panel></outliner-panel>
        <section class="view">
          <div class="vmenu">${["View", "Shading", "Lighting", "Show", "Renderer", "Panels"].map((m) => html`<button>${m}</button>`)}</div>
          <div class="vbar">
            ${this.ics(["|", "cam", "camLock", "camGear", "bookmark", "plane", "pan", "pencil", "|", "grid", "film", "res", "dim", "chart", "action", "title", "|",
              "wire", "shaded", "half", "textured", "checker", "bulb", "shadow", "|", "ao", "blur", "aa", "dof", "|", "isolate", "|", "xray", "xrayA", "xrayJ", "|", "aperture"], ["grid", "shaded"], 11)}
            <input class="num" aria-label="Exposure" value="0.00" />${this.ics(["contrast"], [], 10)}<input class="num" aria-label="Gamma" value="1.00" />
            ${this.ics(["ball"], ["ball"], 11)}<div class="drop"><select aria-label="Color space"><option>sRGB gamma</option></select></div>
          </div>
          <div class="canvas">${scene()}<span class="cam">persp</span></div>
        </section>
        <aside class="right">
          <div class="rmenu top">${["Channels", "Edit", "Object", "Show"].map((m) => html`<button>${m}</button>`)}</div>
          <div class="node">L_WristCON</div>
          ${CHANNELS.map(([n, v]) => html`<label class="channel">${n}<input .value=${v} /></label>`)}
          <div class="node">SHAPES</div><div class="shape">L_WristCONShape</div>
          <div class="dark one"></div>
          <div class="ltabs"><button class="on">Display</button><button>Anim</button></div>
          <div class="rmenu">${["Layers", "Options", "Help"].map((m) => html`<button>${m}</button>`)}</div>
          <div class="acts">${icon("layerUp", 11)}${icon("layerDown", 11)}</div>
          <div class="dark two"></div>
          <div class="hbar"><svg width="4" height="6"><path d="M4 0v6L0 3z" fill="#ccc" /></svg><div></div></div>
        </aside>
      </main>

      <section class="timeline"><span class="grip"></span>
        <div class="ruler"><span class="now">1</span>${FRAMES.map((f) => html`<span class="tick">${f}</span>`)}</div>
        <input class="box" aria-label="Current time" value="1" />
        ${this.ics(["toStart", "stepBack", "keyBack", "playBack", "play"])}
      </section>
      <section class="range"><span class="grip"></span>
        <input class="box" aria-label="Animation start" value="1" /><input class="box" aria-label="Playback start" value="1" />
        <div class="track"><div class="span"><i></i>1<span class="fill"></span>120<i></i></div></div>
        <input class="box" aria-label="Playback end" value="120" /><input class="box" aria-label="Animation end" value="200" />
        <span class="sep"></span><span class="ic"><i class="tri"></i></span><span class="field">No Character Set</span>
        <span class="ic"><i class="tri"></i></span><span class="field">No Anim Layer</span><span class="sep"></span><span class="sep"></span>
        <div class="drop fps"><select aria-label="Frame rate"><option>24 fps</option></select></div>
        <div class="end">${icon("loop", 14)}${icon("prefs", 16)}</div>
      </section>
      <section class="cmd"><span class="grip"></span><label for="mel">MEL</label><input class="a" id="mel" /><input class="b" aria-label="Result" readonly /></section>
      <footer class="help"><span class="grip"></span><span>Move Tool: Use manipulator to move object(s). Ctrl+MMB+drag to move components along normals. Shift+drag manipulator axis or plane handles to extrude components or clone objects. Ctrl+Shift+LMB+drag to constrain movement to a connected edge. Use D or INSERT to change the pivot position and axis orientation.</span></footer>
      <div class="mark"><b>Activate Windows</b>Go to Settings to activate Windows.</div>
      <control-maker class="panel"></control-maker>`;
  }
}
